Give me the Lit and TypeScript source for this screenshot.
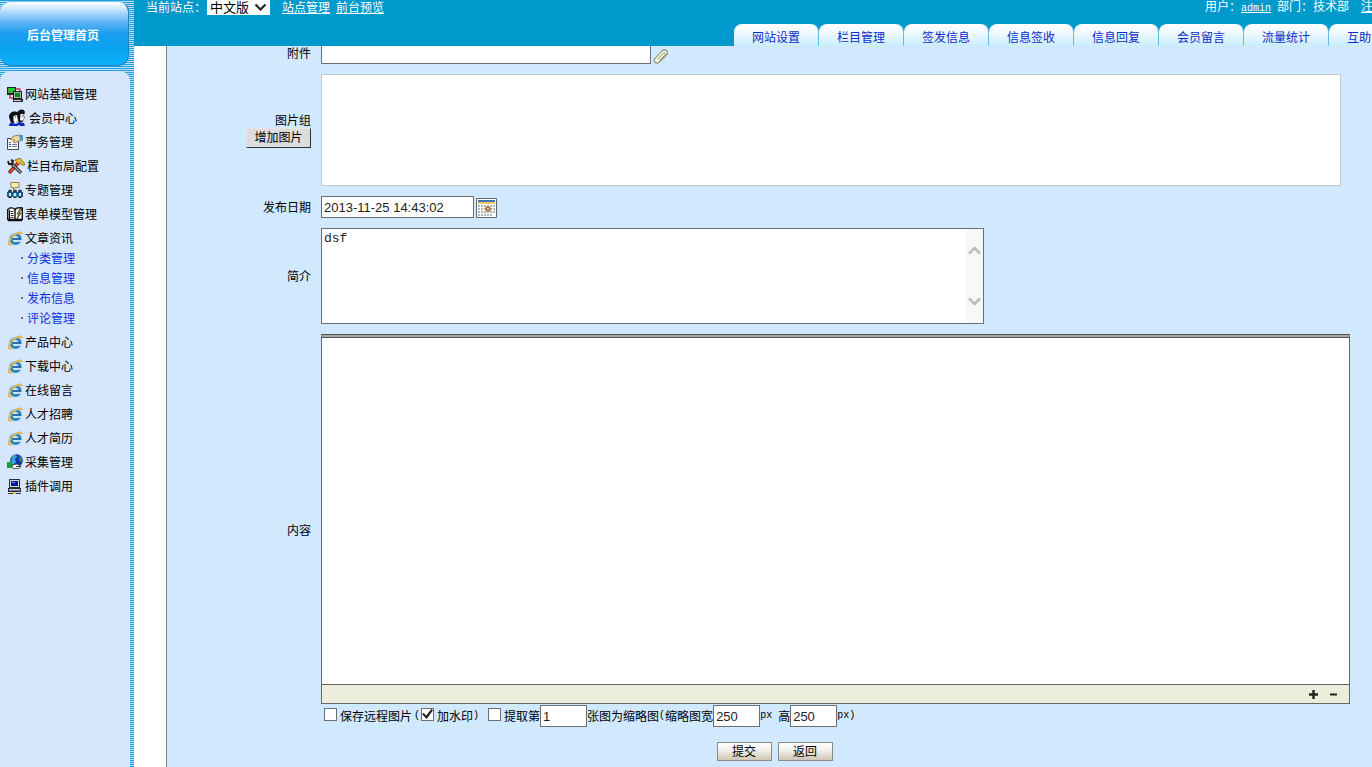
import { LitElement, html, svg, css, nothing } from "lit";
import { customElement } from "lit/decorators.js";

const ieIcon = svg`<svg width="16" height="16" viewBox="0 0 16 16" aria-hidden="true">
  <circle cx="8.500" cy="9" r="4.600" fill="#dff1fd" stroke="#2b80c0" stroke-width="3"/>
  <path d="M5 9h9" stroke="#2472b4" stroke-width="2.200"/>
  <path d="M10.500 10.100h5v1.800h-5z" fill="#d5e6fd"/>
  <path d="M4.600 6a5 5 0 0 1 6-2" stroke="#8fd0f4" stroke-width="1.400" fill="none"/>
  <path d="M14.600 4.600c.4-2.600-2.400-2.800-5.400-.8C5 6.200 1.200 11 2 13.800c.4 1.400 2 1 3.600 0" stroke="#d8bb4c" stroke-width="1.900" fill="none"/>
</svg>`;

const monitorsIcon = svg`<svg width="16" height="16" viewBox="0 0 16 16" aria-hidden="true">
  <path d="M0 1h9v8H0z" fill="#1d2a1f"/><path d="M1 2h7v5H1z" fill="#4a9a52"/><path d="M2 2h5v4H2z" fill="#12d42e"/>
  <path d="M9 3h4v3" stroke="#c8354e" stroke-width="1.400" fill="none"/><path d="M3 9v3h3" stroke="#c8354e" stroke-width="1.400" fill="none"/>
  <path d="M6 5h9v8H6z" fill="#222"/><path d="M7 6h7v6H7z" fill="#8fb796"/><path d="M8 7h5v4H8z" fill="#12852a"/>
  <path d="M6 13h10v3H6z" fill="#2a2a2a"/><path d="M7 14h7v1H7z" fill="#d8d8cc"/>
</svg>`;

const membersIcon = svg`<svg width="20" height="18" viewBox="0 0 20 18" aria-hidden="true">
  <path d="M10 4c1-4 7-5 8-1l-1 3 .5 3-2 4h-4z" fill="#111"/>
  <path d="M13.500 5h3l.5 5-2 2-2-1z" fill="#f4f4f4"/>
  <path d="M2 8c0-5 6-7 9-4 1 2 0 3 0 5l-1 4-6 1z" fill="#0b0b14"/>
  <path d="M6.500 7l3.500-1 .8 5-2 3-2.300-2z" fill="#fff"/><path d="M8 8h1M15 7h1" stroke="#222"/>
  <path d="M2 17c0-3 2-4 4-3l3 1 3-2 5 1 1 3h-5l-1-1-2 1z" fill="#1428b8"/>
</svg>`;

const formIcon = svg`<svg width="16" height="16" viewBox="0 0 16 16" aria-hidden="true">
  <path d="M.5 4.500h11v11H.5z" fill="#fff" stroke="#39475c"/>
  <path d="M2 8.500h2M2 10.500h2M2 12.500h2" stroke="#2e62c0"/><path d="M5 10.500h5M5 12.500h5" stroke="#6a7a98"/>
  <path d="M3 5l4-3 6-1 3 1v4l-4 1-4 2-2-1 2-2H4z" fill="#f0d79c" stroke="#86683a" stroke-width=".8"/>
  <path d="M12 1h4v5l-3 1z" fill="#4f9cd4"/>
</svg>`;

const toolsIcon = svg`<svg width="18" height="16" viewBox="0 0 18 16" aria-hidden="true">
  <path d="M2 15L12 4" stroke="#7c1f18" stroke-width="3.400"/><path d="M2.500 14.500L11 5" stroke="#ef4a36" stroke-width="1.600"/>
  <path d="M8 2l5-2 5 6-2 1.500-2.500-2L11 6z" fill="#e9b62c" stroke="#6d5410" stroke-width=".7"/>
  <path d="M4 5l10 10" stroke="#2a2a2a" stroke-width="3.200"/><path d="M5 6l8.500 8.500" stroke="#a8a8a8" stroke-width="1.200"/>
  <path d="M1 3l1 3h3l1-3-2-1" stroke="#222" stroke-width="2" fill="none"/>
</svg>`;

const topicIcon = svg`<svg width="16" height="16" viewBox="0 0 16 16" aria-hidden="true">
  <path d="M4 .5h8v5H8l-1.500 2v-2H4z" fill="#fbeeb0" stroke="#8f8445"/>
  <circle cx="3" cy="9.500" r="2" fill="#283a50"/><circle cx="8" cy="9.500" r="2" fill="#283a50"/><circle cx="13" cy="9.500" r="2" fill="#283a50"/>
  <path d="M0 10h16v5H0z" fill="#24507e"/><path d="M5.500 11h5v4h-5z" fill="#2186c8"/>
  <path d="M2 11h2v3H2zM7 11h2v3H7zM12 11h2v3h-2z" fill="#d6eaff"/><path d="M3 15v1M8 15v1M13 15v1" stroke="#222" stroke-width="3"/>
</svg>`;

const bookIcon = svg`<svg width="16" height="16" viewBox="0 0 16 16" aria-hidden="true">
  <path d="M.7 3.500L3 2c3-.5 4 0 5 1.500C9 2 12 1.500 15.300 2v11.500H.7z" fill="#fff" stroke="#111" stroke-width="1.400"/>
  <path d="M8 3v11M2.500 4v9" stroke="#111" stroke-width="1.400"/>
  <path d="M4 5.500h2.500M4 7.500h2.500M4 9.500h2.500M4 11.500h2.500" stroke="#333"/>
  <path d="M13 3l-3 5h2l-2 5 4-6h-2l3-4z" fill="#f0c722" stroke="#111" stroke-width=".7"/>
  <path d="M1 14.500h14" stroke="#111" stroke-width="1.500"/>
</svg>`;

const globeIcon = svg`<svg width="16" height="16" viewBox="0 0 16 16" aria-hidden="true">
  <circle cx="9.500" cy="6.500" r="6.300" fill="#1733a8"/>
  <path d="M5 3c2-3 5-2 5 0L8 5l1 3-3 3c-2-2-2-5-1-8z" fill="#38a8dc"/><path d="M12 2l3 2v4l-3-1z" fill="#27903e"/>
  <path d="M0 8h5v6H0z" fill="#16a530"/>
  <path d="M5 11l5-1 4 2-2 2.500H6z" fill="#fff" stroke="#333" stroke-width=".8"/><path d="M9 12.500h5" stroke="#333"/>
</svg>`;

const computerIcon = svg`<svg width="16" height="16" viewBox="0 0 16 16" aria-hidden="true">
  <path d="M2 1h11v9H2z" fill="#2a2a3a"/><path d="M3 2h9v7H3z" fill="#d7d8df"/><path d="M4 3h7v5H4z" fill="#0a169e"/>
  <path d="M5 4.500h3" stroke="#728cff"/><path d="M1 10h13v4H1z" fill="#26263a"/><path d="M2 11h11v1.500H2z" fill="#d2d3dc"/>
  <path d="M1 15.500h5M9 15.500h5" stroke="#333"/><path d="M6 14h3v2H6z" fill="#dfc531"/>
</svg>`;

const clipIcon = svg`<svg width="16" height="16" viewBox="0 0 16 16" aria-hidden="true">
  <path d="M2 10.500L8.500 3.500c1.500-1.700 3.500-2.300 5-.8s.9 3.500-.6 5L6.500 13.800c-1.400 1.300-3.300 1.500-4.400.5s-1.200-2.600-.1-3.800z" fill="#fbf9e0" stroke="#85856e" stroke-width="1.100"/>
  <path d="M4.500 11.500L10 5.600c.6-.6 1.500-.8 2-.3s.4 1.300-.2 1.900L6.300 12.500" fill="none" stroke="#85856e"/>
</svg>`;

const calendarDots = [7, 10, 13, 16].flatMap((y) => [3, 6, 9, 12, 15].map((x) => [x, y]));
const calendarIcon = svg`<svg width="21" height="20" viewBox="0 0 21 20" aria-hidden="true">
  <path d="M.5.5h20v19H.5z" fill="#fff" stroke="#64686c"/>
  <path d="M2 2h17v2H2z" fill="#4271b0"/><path d="M2 4h17v2H2z" fill="#eccb69"/>
  ${calendarDots.map(([x, y]) => svg`<rect x=${x - 1} y=${y} width="2" height="2" fill="#b4b4b4"/>`)}
  <path d="M17 7h2v2h-2zM17 10h2v2h-2zM17 13h2v2h-2z" fill="#b4b4b4"/>
  <circle cx="12" cy="11" r="2" fill="#e1bd9b" stroke="#a86b42" stroke-width="1.500"/>
</svg>`;

const chevron = (up: boolean) => svg`<svg width="13" height="9" viewBox="0 0 13 9" aria-hidden="true">
  <path d=${up ? "M1 7.500L6.500 2 12 7.500" : "M1 1.500L6.500 7 12 1.500"} fill="none" stroke="#bcbcbc" stroke-width="2.600"/>
</svg>`;

interface MenuItem {
  text: string;
  icon: unknown;
  children?: string[];
}

const menu: MenuItem[] = [
  { text: "网站基础管理", icon: monitorsIcon },
  { text: "会员中心", icon: membersIcon },
  { text: "事务管理", icon: formIcon },
  { text: "栏目布局配置", icon: toolsIcon },
  { text: "专题管理", icon: topicIcon },
  { text: "表单模型管理", icon: bookIcon },
  { text: "文章资讯", icon: ieIcon, children: ["分类管理", "信息管理", "发布信息", "评论管理"] },
  { text: "产品中心", icon: ieIcon },
  { text: "下载中心", icon: ieIcon },
  { text: "在线留言", icon: ieIcon },
  { text: "人才招聘", icon: ieIcon },
  { text: "人才简历", icon: ieIcon },
  { text: "采集管理", icon: globeIcon },
  { text: "插件调用", icon: computerIcon },
];

const tabs = ["网站设置", "栏目管理", "签发信息", "信息签收", "信息回复", "会员留言", "流量统计", "互助中心"];

const base = css`
  * { box-sizing: border-box; }
  a { color: inherit; text-decoration: none; }
  svg { display: block; flex: none; }
  input, select, textarea, button { margin: 0; border-radius: 0; outline: none; color: #222; font-family: inherit; }
`;

@customElement("side-menu")
class SideMenu extends LitElement {
  static styles = [base, css`
    :host {
      display: flex;
      flex-direction: column;
      gap: 5px;
      padding: 1px 4px 0 0;
      background: repeating-linear-gradient(#1f9fdc 0 1px, #b5e2fa 1px 2px);
    }
    .home {
      display: flex;
      align-items: center;
      justify-content: center;
      height: 65px;
      margin-right: 1px;
      padding: 2px 2px 0 0;
      border: 1px solid #1c84c8;
      border-top-color: #7dc4f2;
      border-left: 0;
      border-radius: 11px;
      background: linear-gradient(#ffffff 0, #c3e2fb 8px, #5fb5f6 20px, #1a9bf0 32px, #08a5f1 48px, #0cb2f8 100%);
      color: #fff;
      font-weight: bold;
    }
    .panel {
      flex: 1;
      padding-top: 11px;
      border-radius: 10px 10px 0 0;
      background: #d5e6fd;
    }
    ul { margin: 0; padding: 0; list-style: none; }
    .item {
      display: flex;
      align-items: center;
      gap: 2px;
      height: 24px;
      padding-left: 7px;
      color: #000;
    }
    .sub { margin: -2px 0 2px; }
    .child {
      display: flex;
      align-items: center;
      gap: 4px;
      height: 20px;
      padding-left: 21px;
      color: #0d2fe0;
    }
    .child::before { content: ""; width: 2px; height: 2px; background: #777; }
  `];

  render() {
    return html`
      <a class="home" href="#">后台管理首页</a>
      <nav class="panel">
        <ul>
          ${menu.map((m) => html`<li>
            <a class="item" href="#">${m.icon}<span>${m.text}</span></a>
            ${m.children
              ? html`<ul class="sub">${m.children.map((c) => html`<li><a class="child" href="#">${c}</a></li>`)}</ul>`
              : nothing}
          </li>`)}
        </ul>
      </nav>
    `;
  }
}

@customElement("top-bar")
class TopBar extends LitElement {
  static styles = [base, css`
    :host {
      display: flex;
      flex-direction: column;
      justify-content: space-between;
      height: 46px;
      overflow: hidden;
      background: #0099cc;
      color: #fff;
    }
    .row {
      display: flex;
      align-items: center;
      height: 24px;
      margin-top: -5px;
      padding-left: 12px;
      white-space: nowrap;
    }
    .row a { text-decoration: underline; }
    .site { display: grid; align-items: center; width: 63px; margin: 0 12px 0 1px; }
    .site select {
      grid-area: 1 / 1;
      width: 63px;
      height: 16px;
      padding: 0 3px;
      appearance: none;
      border: 0;
      background: #fff;
      font-size: 13px;
      line-height: 16px;
      color: #000;
    }
    .site svg { grid-area: 1 / 1; justify-self: end; margin-right: 3px; pointer-events: none; }
    .links { display: flex; gap: 6px; }
    .user { display: flex; align-items: baseline; width: 167px; margin-left: auto; overflow: hidden; }
    .name { margin-right: 6px; font-family: "Liberation Mono", monospace; font-size: 10px; }
    .dept { margin-right: 12px; }
    .tabs { display: flex; width: 638px; height: 22px; margin-left: auto; overflow: hidden; }
    .tab {
      display: flex;
      flex: 0 0 85px;
      align-items: center;
      justify-content: center;
      padding-top: 4px;
      border-right: 1px solid #62bfe8;
      border-radius: 8px 8px 0 0;
      background: linear-gradient(#ffffff 0, #f0faff 40%, #c8ecfc 100%);
      color: #0d2bc8;
    }
  `];

  render() {
    return html`
      <div class="row">
        <label for="site">当前站点：</label>
        <span class="site">
          <select id="site"><option>中文版</option></select>
          <svg width="13" height="9" viewBox="0 0 13 9" aria-hidden="true"><path d="M1.500 1.500L6.500 6.500l5-5" fill="none" stroke="#222" stroke-width="2.200"/></svg>
        </span>
        <span class="links"><a href="#">站点管理</a><a href="#">前台预览</a></span>
        <span class="user">
          <span>用户：</span><a class="name" href="#">admin</a><span class="dept">部门：技术部</span><a href="#">注销</a>
        </span>
      </div>
      <nav class="tabs">${tabs.map((t) => html`<a class="tab" href="#">${t}</a>`)}</nav>
    `;
  }
}

@customElement("article-form")
class ArticleForm extends LitElement {
  static styles = [base, css`
    :host {
      display: block;
      min-height: 0;
      margin-left: 32px;
      overflow: hidden;
      border-left: 1px solid #808080;
      background: #d1e9fe;
      color: #000;
    }
    form {
      display: grid;
      grid-template-columns: 144px 1fr;
      gap: 10px;
      align-items: center;
      margin-top: -4px;
      padding-right: 22px;
    }
    .caption { display: flex; flex-direction: column; align-items: flex-end; padding-bottom: 1px; line-height: 16px; }
    .line { display: flex; align-items: flex-end; gap: 2px; }
    .text {
      height: 22px;
      padding: 0 2px;
      border: 1px solid #6b6f73;
      background: #fff;
      font-family: "Liberation Sans", Arial, sans-serif;
      font-size: 13px;
    }
    .file { width: 330px; }
    .date { width: 153px; }
    .num { width: 47px; }
    .icon { padding: 0; border: 0; background: none; }
    .add {
      width: 65px;
      height: 20px;
      padding: 0 0 2px;
      border: 1px solid #e6e6e6;
      border-right-color: #333;
      border-bottom-color: #333;
      background: #dcdcdc;
      color: #000;
      font-size: 12px;
      line-height: 16px;
    }
    .pictures { height: 112px; margin-right: 9px; border: 1px solid #c6c9cc; background: #fff; }
    .intro { display: flex; width: 663px; height: 96px; border: 1px solid #6b6f73; background: #fff; }
    .intro textarea {
      flex: 1;
      padding: 2px;
      border: 0;
      resize: none;
      overflow: hidden;
      font-family: "Liberation Mono", monospace;
      font-size: 13px;
      line-height: 15px;
    }
    .scroll {
      display: flex;
      flex-direction: column;
      justify-content: space-between;
      align-items: center;
      width: 17px;
      padding: 17px 0;
      background: #f8f8f8;
    }
    .editor { border: 1px solid #666; border-top: 4px double #555; background: #a6a6a6; }
    .editor textarea { display: block; width: 100%; height: 346px; border: 0; resize: none; background: #fff; }
    .status {
      display: flex;
      justify-content: flex-end;
      align-items: center;
      gap: 11px;
      height: 19px;
      padding-right: 11px;
      border-top: 1px solid #666;
      background: #ededdb;
    }
    .size { width: 9px; height: 9px; padding: 0; border: 0; background: none; }
    .options { display: flex; align-items: center; padding: 1px 0 0 3px; white-space: nowrap; }
    .lat { font-family: "Liberation Mono", monospace; font-size: 10px; }
    .options label { display: flex; align-items: center; }
    .check { display: flex; gap: 3px; }
    .check input {
      display: grid;
      place-items: center;
      width: 13px;
      height: 13px;
      margin-bottom: 4px;
      appearance: none;
      border: 1px solid #6b6f73;
      background: #fff;
    }
    .check input:checked::before {
      content: "";
      width: 11px;
      height: 10px;
      background: #222;
      clip-path: polygon(0 50%, 15% 40%, 38% 65%, 85% 0, 100% 12%, 42% 100%);
    }
    .open { margin: 0 1px 0 2px; }
    .close { margin-right: 9px; }
    .high { margin-left: 6px; }
    .actions {
      display: flex;
      grid-column: 1 / -1;
      justify-content: center;
      gap: 6px;
      margin: 5px 0 0 32px;
    }
    .actions button {
      width: 55px;
      height: 19px;
      padding: 0 0 1px;
      border: 1px solid #8b8b86;
      background: linear-gradient(#ffffff, #f1eee8 45%, #cfc6b4);
      color: #000;
      font-size: 12px;
      line-height: 16px;
    }
  `];

  render() {
    return html`
      <form @submit=${(e: Event) => e.preventDefault()}>
        <label class="caption" for="file">附件</label>
        <div class="line"><input class="text file" id="file" type="text"><button class="icon" type="button" aria-label="附件">${clipIcon}</button></div>

        <div class="caption"><span>图片组</span><button class="add" type="button">增加图片</button></div>
        <div class="pictures"></div>

        <label class="caption" for="date">发布日期</label>
        <div class="line"><input class="text date" id="date" type="text" value="2013-11-25 14:43:02"><button class="icon" type="button" aria-label="日期">${calendarIcon}</button></div>

        <label class="caption" for="intro">简介</label>
        <div class="intro">
          <textarea id="intro" .value=${"dsf"}></textarea>
          <div class="scroll">${chevron(true)}${chevron(false)}</div>
        </div>

        <label class="caption" for="content">内容</label>
        <div>
          <div class="editor">
            <textarea id="content"></textarea>
            <div class="status">
              <button class="size" type="button" aria-label="增高"><svg width="9" height="9" viewBox="0 0 9 9"><path d="M0 4.500h9M4.500 0v9" stroke="#222" stroke-width="2.400"/></svg></button>
              <button class="size" type="button" aria-label="减低"><svg width="9" height="9" viewBox="0 0 9 9"><path d="M1 4.500h7" stroke="#222" stroke-width="2"/></svg></button>
            </div>
          </div>
          <div class="options">
            <label class="check"><input type="checkbox">保存远程图片</label>
            <span class="lat open">(</span>
            <label class="check"><input type="checkbox" checked>加水印</label>
            <span class="lat close">)</span>
            <label class="check"><input type="checkbox">提取第</label>
            <input class="text num" id="index" type="text" value="1">
            <label for="index">张图为缩略图</label>
            <span class="lat">(</span>
            <label for="width">缩略图宽</label>
            <input class="text num" id="width" type="text" value="250">
            <span class="lat">px</span>
            <label class="high" for="height">高</label>
            <input class="text num" id="height" type="text" value="250">
            <span class="lat">px)</span>
          </div>
        </div>

        <div class="actions"><button type="submit">提交</button><button type="button">返回</button></div>
      </form>
    `;
  }
}

@customElement("app-root")
class AppRoot extends LitElement {
  static styles = css`
    :host {
      display: grid;
      grid-template-columns: 134px minmax(0, 1fr);
      height: 100vh;
      overflow: hidden;
      background: #fff;
      font: 12px/16px "Noto Sans CJK SC", sans-serif;
    }
    .main { display: grid; grid-template-rows: auto minmax(0, 1fr); min-height: 0; min-width: 0; }
  `;

  render() {
    return html`
      <side-menu></side-menu>
      <div class="main">
        <top-bar></top-bar>
        <article-form></article-form>
      </div>
    `;
  }
}
